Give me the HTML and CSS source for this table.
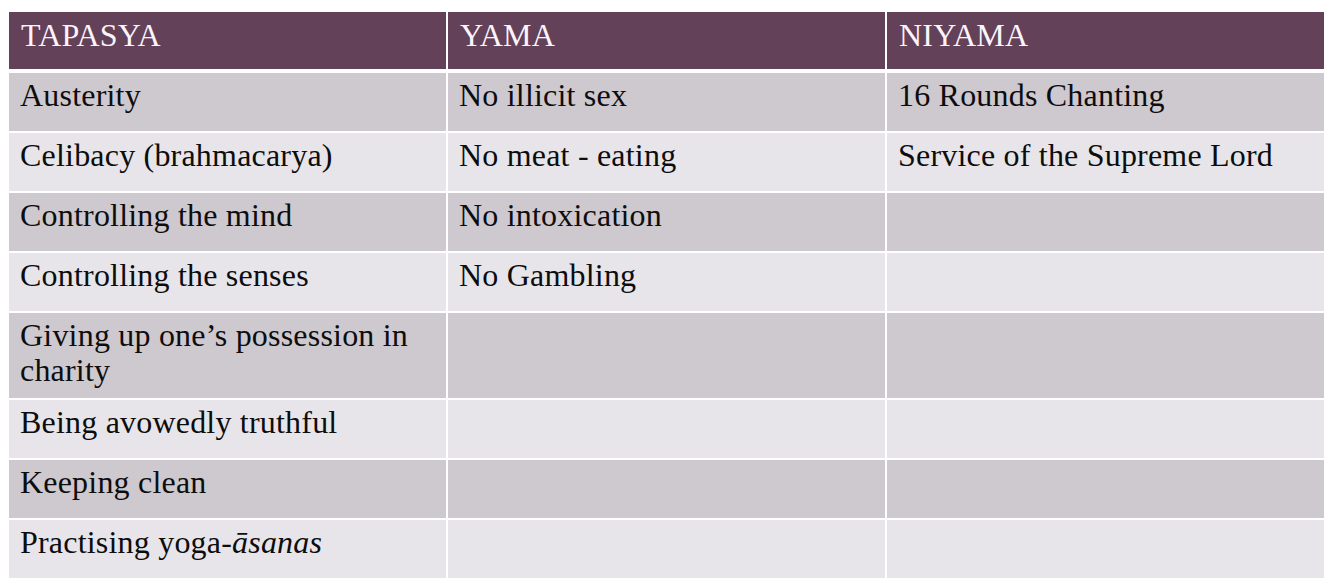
FILE: index.html
```html
<!DOCTYPE html>
<html lang="en">
<head>
<meta charset="utf-8">
<title>Tapasya, Yama, Niyama</title>
<link rel="stylesheet" href="styles.css">
</head>
<body>
<div class="wrap">
<table class="grid">
  <colgroup>
    <col class="c"><col class="c"><col class="c">
  </colgroup>
  <thead>
    <tr><th>TAPASYA</th><th>YAMA</th><th>NIYAMA</th></tr>
  </thead>
  <tbody>
    <tr class="odd"><td>Austerity</td><td>No illicit sex</td><td>16 Rounds Chanting</td></tr>
    <tr class="even"><td>Celibacy (brahmacarya)</td><td>No meat - eating</td><td>Service of the Supreme Lord</td></tr>
    <tr class="odd"><td>Controlling the mind</td><td>No intoxication</td><td></td></tr>
    <tr class="even"><td>Controlling the senses</td><td>No Gambling</td><td></td></tr>
    <tr class="odd"><td>Giving up one’s possession in charity</td><td></td><td></td></tr>
    <tr class="even"><td>Being avowedly truthful</td><td></td><td></td></tr>
    <tr class="odd"><td>Keeping clean</td><td></td><td></td></tr>
    <tr class="even"><td>Practising yoga-<em>āsanas</em></td><td></td><td></td></tr>
  </tbody>
</table>
</div>
</body>
</html>
```

FILE: styles.css
```css
html, body {
  margin: 0;
  padding: 0;
  background: #ffffff;
}
.wrap {
  padding: 10px 0 0 7px;
}
.grid {
  border-collapse: separate;
  border-spacing: 2px;
  table-layout: fixed;
  width: 1319px;
  font-family: "Liberation Serif", "Times New Roman", serif;
  font-size: 32px;
  letter-spacing: 0.2px;
  line-height: 35px;
  color: #0d0d0d;
}
.grid .c {
  width: 437px;
}
.grid th,
.grid td {
  box-sizing: border-box;
  text-align: left;
  vertical-align: top;
  padding: 5px 11px 10px 11px;
  font-weight: normal;
}
.grid th {
  height: 59px;
  padding: 6px 11px 10px 12px;
  background: #634159;
  color: #fcf4f9;
  border-bottom: 2px solid #ffffff;
}
.grid td {
  height: 58px;
}
.odd td {
  background: #cec8cf;
}
.even td {
  background: #e7e5ea;
}
.grid em {
  font-style: italic;
}
```
